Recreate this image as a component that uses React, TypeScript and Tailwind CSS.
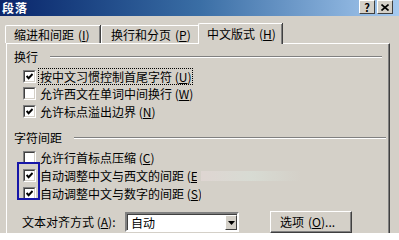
import React from 'react'

function Key({ k }: { k: string }) {
  return (
    <span>
      (<span className="underline underline-offset-1">{k}</span>)
    </span>
  )
}

function Check({ checked }: { checked?: boolean }) {
  return (
    <span className="box-border flex h-[13px] w-[13px] shrink-0 border border-t-[#808080] border-l-[#808080] border-b-white border-r-white">
      <span className="flex flex-1 items-center justify-center border border-t-[#404040] border-l-[#404040] border-b-[#d4d0c8] border-r-[#d4d0c8] bg-white">
        {checked && (
          <svg width="7" height="7" viewBox="0 0 7 7">
            <polyline points="0.6,3 2.6,5.2 6.6,1" fill="none" stroke="black" strokeWidth="2" />
          </svg>
        )}
      </span>
    </span>
  )
}

function Row({ checked, children, focus, h = 'h-[17.5px]' }: { checked?: boolean; children: React.ReactNode; focus?: boolean; h?: string }) {
  return (
    <div className={`flex items-center pl-[16px] ${h}`}>
      <Check checked={checked} />
      <span
        className={`ml-[3px] whitespace-nowrap px-[1px] leading-[15px] ${focus ? 'outline-1 outline-dotted outline-black' : ''}`}
      >
        {children}
      </span>
    </div>
  )
}

function Group({ title, mr }: { title: string; mr: string }) {
  return (
    <div className="flex h-[14px] items-center pl-[7px]">
      <span className="whitespace-nowrap">{title}</span>
      <div className={`ml-[12px] h-[2px] flex-1 border-t border-b border-t-[#808080] border-b-white ${mr}`} />
    </div>
  )
}

export default function App() {
  return (
    <div className="relative flex h-[233px] w-[399px] flex-col overflow-hidden bg-[#d4d0c8] font-['Noto_Sans_CJK_SC',sans-serif] text-[12px] text-black">
      {/* title bar */}
      <div className="flex h-[16px] shrink-0 items-center justify-between bg-linear-to-r from-[#0a246a] via-[#3a6ea5] to-[#a6caf0] pl-[2px] pr-[6px]">
        <span className="text-[12px] leading-[16px] font-bold tracking-[1px] text-white">段落</span>
        <div className="flex gap-[2px] self-start">
          <div className="flex h-[14px] w-[16px] items-center justify-center border border-t-white border-l-white border-b-[#404040] border-r-[#404040] bg-[#d4d0c8] text-[11px] leading-none font-bold">
            ?
          </div>
          <div className="flex h-[14px] w-[16px] items-center justify-center border border-t-white border-l-white border-b-[#404040] border-r-[#404040] bg-[#d4d0c8]">
            <svg width="8" height="7" viewBox="0 0 8 7">
              <path d="M0.5 0.5 L7.5 6.5 M7.5 0.5 L0.5 6.5" stroke="black" strokeWidth="1.6" />
            </svg>
          </div>
        </div>
      </div>

      {/* tabs */}
      <div className="flex h-[27px] shrink-0 items-end pl-[5px]">
        <div className="flex h-[18px] w-[95px] items-center rounded-tl-[2px] border-t border-l border-t-white border-l-white pl-[8px] shadow-[inset_-1px_0_0_#808080,1px_0_0_#404040] whitespace-nowrap">
          缩进和间距 <span className="ml-[4px]"><Key k="I" /></span>
        </div>
        <div className="ml-[1px] flex h-[18px] w-[97px] items-center rounded-tl-[2px] border-t border-l border-t-white border-l-white pl-[9px] whitespace-nowrap">
          换行和分页 <span className="ml-[4px]"><Key k="P" /></span>
        </div>
        <div className="relative z-10 -mb-[1px] flex h-[21px] w-[84px] items-center rounded-tl-[2px] border-t border-l border-t-white border-l-white bg-[#d4d0c8] pl-[8px] shadow-[inset_-1px_0_0_#808080,1px_0_0_#404040] whitespace-nowrap">
          中文版式 <span className="ml-[4px]"><Key k="H" /></span>
        </div>
      </div>

      {/* panel */}
      <div className="ml-[6px] flex w-[384px] flex-1 flex-col border-t border-l border-r border-t-white border-l-white border-r-[#404040] pt-[6px] shadow-[inset_-1px_0_0_#808080]">
        <Group title="换行" mr="mr-[7px]" />
        <div className="mt-[3.5px]">
          <Row checked focus>
            按中文习惯控制首尾字符 <Key k="U" />
          </Row>
          <Row>
            允许西文在单词中间换行 <Key k="W" />
          </Row>
          <Row checked>
            允许标点溢出边界 <Key k="N" />
          </Row>
        </div>

        <div className="mt-[11px]">
          <Group title="字符间距" mr="mr-[3px]" />
        </div>
        <div className="mt-[3px]">
          <Row h="h-[18px]">
            允许行首标点压缩 <Key k="C" />
          </Row>
          <div className="flex h-[19px] items-center">
            <div className="flex w-[190px] items-center overflow-hidden pl-[16px]">
              <Check checked />
              <span className="ml-[4px] whitespace-nowrap leading-[15px]">
                自动调整中文与西文的间距 (<span className="underline underline-offset-1">E</span>
              </span>
            </div>
            <div className="ml-[4px] h-[10px] w-[100px] bg-linear-to-r from-[#e3d8d6] via-[#d9e0d8] to-[#d4d0c8] opacity-70" />
          </div>
          <div className="flex h-[17px] items-center">
            <div className="flex w-[194px] items-center overflow-hidden pl-[16px]">
              <Check checked />
              <span className="ml-[4px] whitespace-nowrap leading-[15px]">
                自动调整中文与数字的间距 (<span className="underline underline-offset-1">S</span>)
              </span>
            </div>
          </div>
        </div>

        <div className="mt-[10px] flex h-[20px] items-center">
          <span className="ml-[15px] w-[103px] whitespace-nowrap">
            文本对齐方式 <Key k="A" />:
          </span>
          <div className="flex h-[20px] w-[114px] border-2 border-t-[#808080] border-l-[#808080] border-b-white border-r-white">
            <div className="flex flex-1 items-center justify-between border-t border-l border-t-[#404040] border-l-[#404040] bg-white pl-[3px]">
              <span className="leading-none">自动</span>
              <div className="flex h-full w-[12px] items-center justify-center border border-t-white border-l-white border-b-[#404040] border-r-[#404040] bg-[#d4d0c8]">
                <svg width="7" height="4" viewBox="0 0 7 4">
                  <path d="M0 0 H7 L3.5 4 Z" fill="black" />
                </svg>
              </div>
            </div>
          </div>
          <div className="ml-[31px] flex h-[22px] w-[82px] items-center border border-t-white border-l-white border-b-[#404040] border-r-[#404040] pl-[9px] shadow-[inset_-1px_-1px_0_#808080] whitespace-nowrap">
            选项 <span className="ml-[4px]"><Key k="O" />...</span>
          </div>
        </div>
      </div>

      {/* annotation box */}
      <div className="absolute top-[162px] left-[17px] h-[38px] w-[23px] border-2 border-[#1616a8]" />
    </div>
  )
}
